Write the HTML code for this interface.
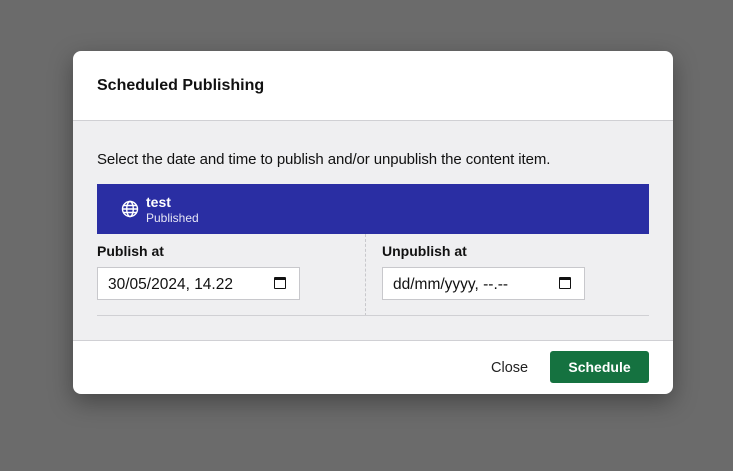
<!DOCTYPE html>
<html><head><meta charset="utf-8"><style>
*{box-sizing:border-box;margin:0;padding:0}
body{width:733px;height:471px;background:#6b6b6b;font-family:"Liberation Sans","DejaVu Sans",sans-serif;position:relative;overflow:hidden;color:#111}
.dlg{position:absolute;left:73px;top:51px;width:600px;height:343px;background:#fff;border-radius:8px;overflow:hidden;box-shadow:0 8px 24px rgba(0,0,0,.35)}
.hd{height:70px;border-bottom:1px solid #d0d0d4;padding:26px 24px;font-weight:bold;font-size:16px}
.bd{position:absolute;top:70px;left:0;width:600px;height:220px;background:#efeff1;border-bottom:1px solid #d0d0d4}
.desc{position:absolute;left:24px;top:30px;font-size:15px;letter-spacing:-0.1px}
.bar{position:absolute;left:24px;top:63px;width:552px;height:50px;background:#2a2ea3;color:#fff}
.bar .t{position:absolute;left:49px;top:10px;font-weight:bold;font-size:14px}
.bar .s{position:absolute;left:49px;top:27px;font-size:12px;color:#e6e6f5}
.lbl{position:absolute;top:122px;font-weight:bold;font-size:14px}
.inp{position:absolute;top:146px;width:203px;height:33px;background:#fff;border:1px solid #c8c8cc;font-size:15.5px;padding:8px 10px;color:#111}
.cal{position:absolute;right:13px;top:9px;width:12px;height:12px;border:1.6px solid #111;border-top-width:3px;border-radius:1px}
.dash{position:absolute;left:292px;top:113px;height:82px;border-left:1px dashed #c8c8cc}
.line{position:absolute;left:24px;width:552px;top:194px;border-top:1px solid #d0d0d4}
.close{position:absolute;left:418px;top:309px;font-size:14.5px;color:#222}
.btn{position:absolute;left:477px;top:300px;width:99px;height:32px;background:#157240;border-radius:3px;color:#fff;font-weight:bold;font-size:14px;text-align:center;line-height:32px}
</style></head><body>
<div class="dlg">
<div class="hd">Scheduled Publishing</div>
<div class="bd">
<div class="desc">Select the date and time to publish and/or unpublish the content item.</div>
<div class="bar">
<svg style="position:absolute;left:24px;top:16px" width="18" height="18" viewBox="0 0 18 18" fill="none" stroke="#fff" stroke-width="1.4"><circle cx="9" cy="9" r="7.5"/><ellipse cx="9" cy="9" rx="3.3" ry="7.5"/><path d="M1.5 9h15M2.5 5.5h13M2.5 12.5h13"/></svg>
<div class="t">test</div><div class="s">Published</div></div>
<div class="lbl" style="left:24px">Publish at</div>
<div class="lbl" style="left:309px">Unpublish at</div>
<div class="inp" style="left:24px">30/05/2024, 14.22<span class="cal"></span></div>
<div class="inp" style="left:309px">dd/mm/yyyy, --.--<span class="cal"></span></div>
<div class="dash"></div>
<div class="line"></div>
</div>
<div class="close">Close</div>
<div class="btn">Schedule</div>
</div>
</body></html>
